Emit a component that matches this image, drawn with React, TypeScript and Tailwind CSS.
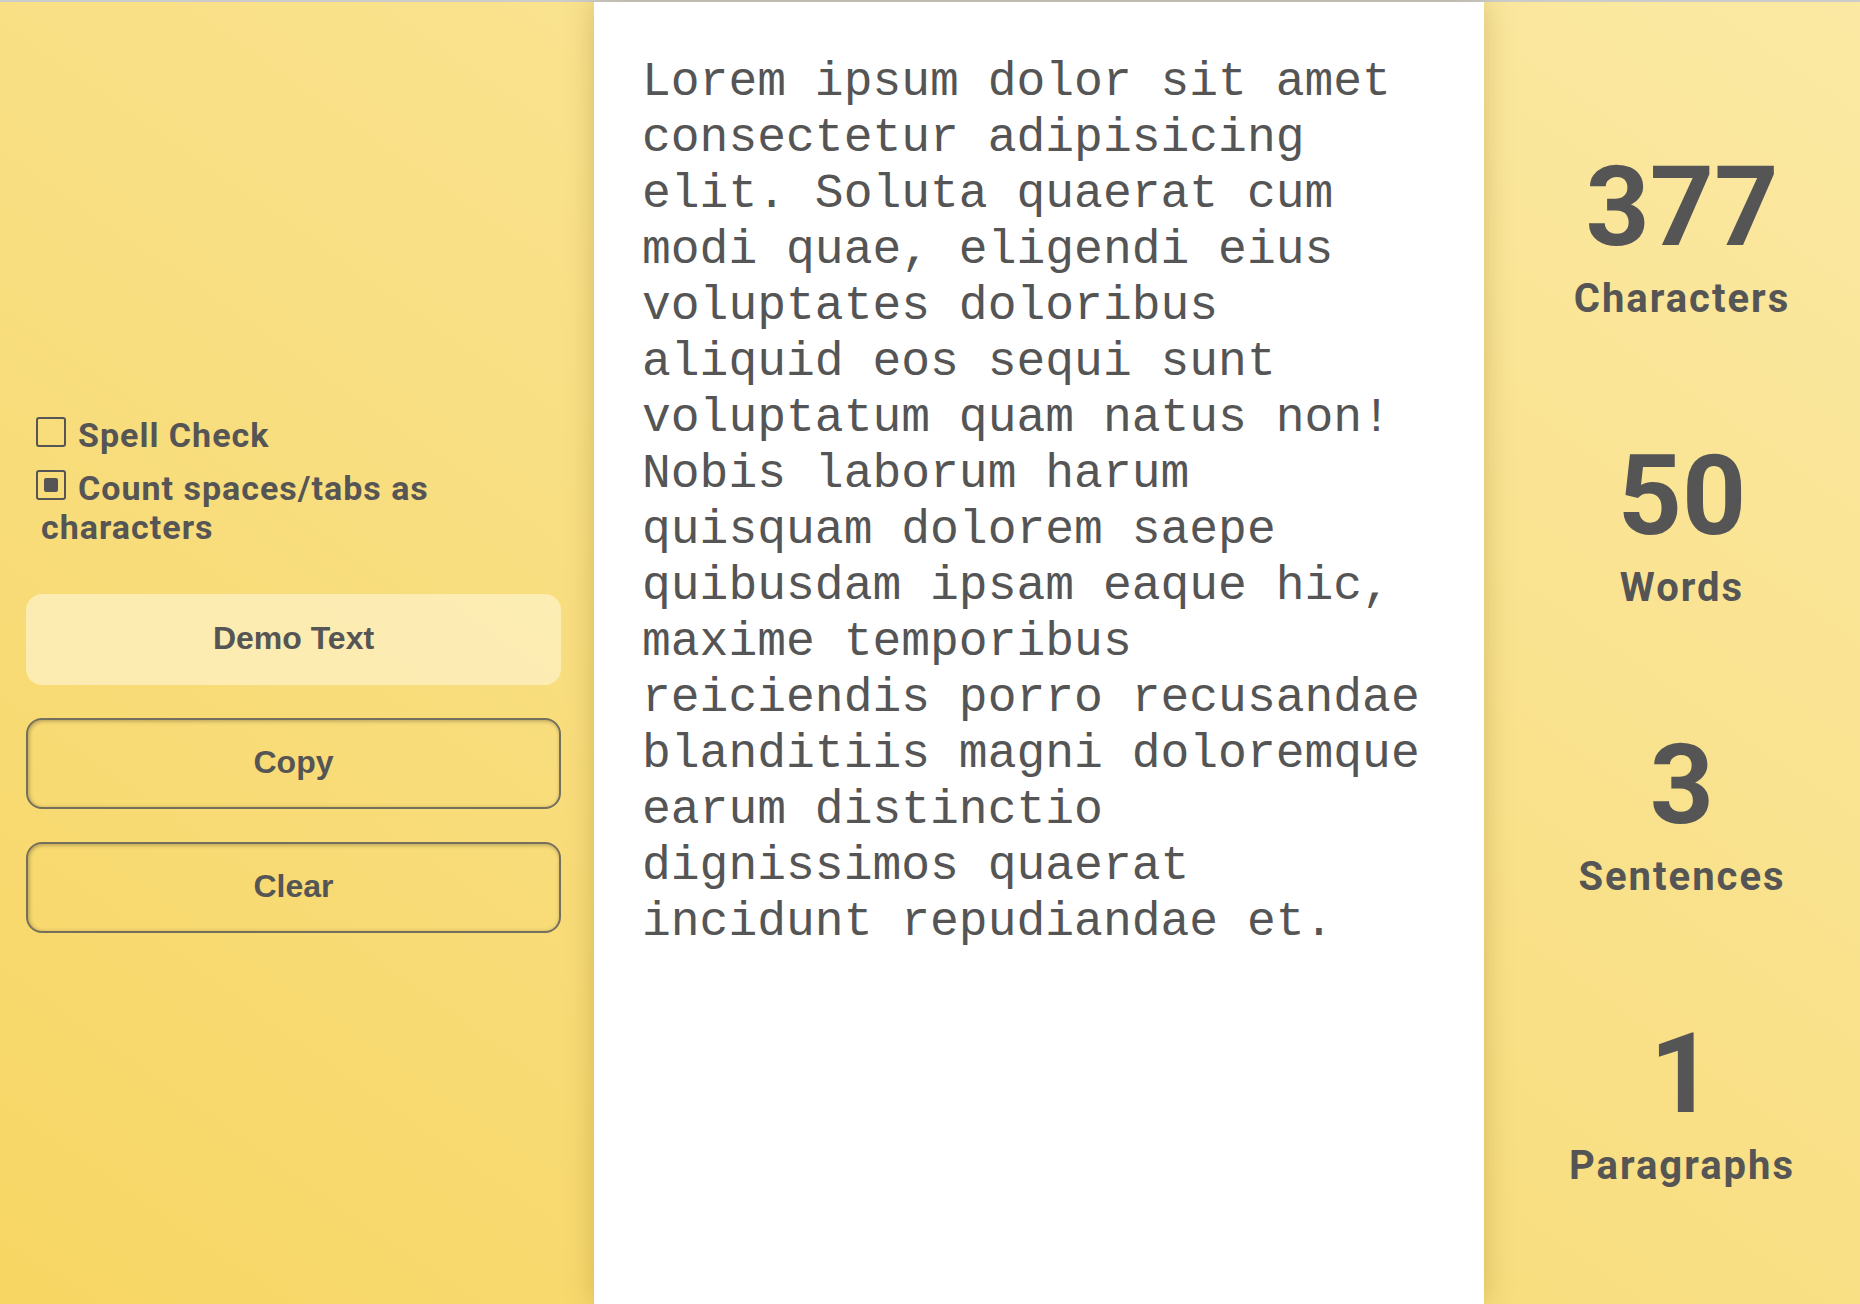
import React from "react";

const TEXT =
  "Lorem ipsum dolor sit amet consectetur adipisicing elit. Soluta quaerat cum modi quae, eligendi eius voluptates doloribus aliquid eos sequi sunt voluptatum quam natus non! Nobis laborum harum quisquam dolorem saepe quibusdam ipsam eaque hic, maxime temporibus reiciendis porro recusandae blanditiis magni doloremque earum distinctio dignissimos quaerat incidunt repudiandae et.";

function Box({ checked }: { checked?: boolean }) {
  return (
    <span className="inline-block w-[30px] h-[30px] border-2 border-[#555555] rounded-[3px] -ml-[5px] mr-[12px] relative">
      {checked && (
        <span className="absolute left-[6px] top-[6px] w-[14px] h-[14px] rounded-[2px] bg-[#555555]" />
      )}
    </span>
  );
}

function Stat({ n, label }: { n: string; label: string }) {
  return (
    <div className="flex flex-col items-center">
      <div className="text-[112px] leading-none font-bold text-[#555555]" style={{ fontFamily: "Roboto, 'Liberation Sans', sans-serif" }}>
        {n}
      </div>
      <div
        className="mt-[12px] text-[40px] leading-[48px] font-bold tracking-[2px] text-[#555555]"
        style={{ fontFamily: "Roboto, 'Liberation Sans', sans-serif" }}
      >
        {label}
      </div>
    </div>
  );
}

export default function App() {
  return (
    <div className="w-[1860px] h-[1304px] flex flex-col bg-gradient-to-tr from-[#f7d663] to-[#fbe9a3] overflow-hidden">
      <div className="h-[2px] bg-[#cccccc] shrink-0" />
      <div className="flex flex-1">
        <div className="w-[594px] shrink-0 pt-[414px] pl-[26px]">
          <div
            className="pl-[15px] pr-[20px] text-[34px] leading-[39px] font-bold tracking-[1px] text-[#555555]"
            style={{ fontFamily: "Roboto, 'Liberation Sans', sans-serif" }}
          >
            <div>
              <Box />
              Spell Check
            </div>
            <div className="mt-[14px] w-[420px]">
              <Box checked />
              Count spaces/tabs as characters
            </div>
          </div>
          <div
            className="mt-[47px] flex flex-col gap-[33px] w-[535px] text-[32px] font-bold text-[#555555]"
            style={{ fontFamily: "'Liberation Sans', Arial, sans-serif" }}
          >
            <button className="h-[91px] pb-[4px] rounded-[16px] bg-[#fdf0c0]/80 flex items-center justify-center">
              Demo Text
            </button>
            <button className="h-[91px] pb-[4px] rounded-[16px] border-2 border-[#74705c] shadow-[inset_1px_1px_4px_rgba(0,0,0,0.3)] flex items-center justify-center">
              Copy
            </button>
            <button className="h-[91px] pb-[4px] rounded-[16px] border-2 border-[#74705c] shadow-[inset_1px_1px_4px_rgba(0,0,0,0.3)] flex items-center justify-center">
              Clear
            </button>
          </div>
        </div>
        <div className="w-[890px] shrink-0 bg-white relative z-10 shadow-[0_0_28px_rgba(120,90,0,0.28)] pt-[52px] px-[48px] pb-[20px]">
          <textarea
            readOnly
            spellCheck={false}
            value={TEXT}
            className="w-full h-full resize-none outline-none border-0 bg-transparent text-[48px] leading-[56px] text-[#555555] p-0"
            style={{ fontFamily: "'Liberation Mono', 'Courier New', monospace" }}
          />
        </div>
        <div className="w-[376px] shrink-0 pl-[20px] pt-[149px] flex flex-col gap-[117px]">
          <Stat n="377" label="Characters" />
          <Stat n="50" label="Words" />
          <Stat n="3" label="Sentences" />
          <Stat n="1" label="Paragraphs" />
        </div>
      </div>
    </div>
  );
}
